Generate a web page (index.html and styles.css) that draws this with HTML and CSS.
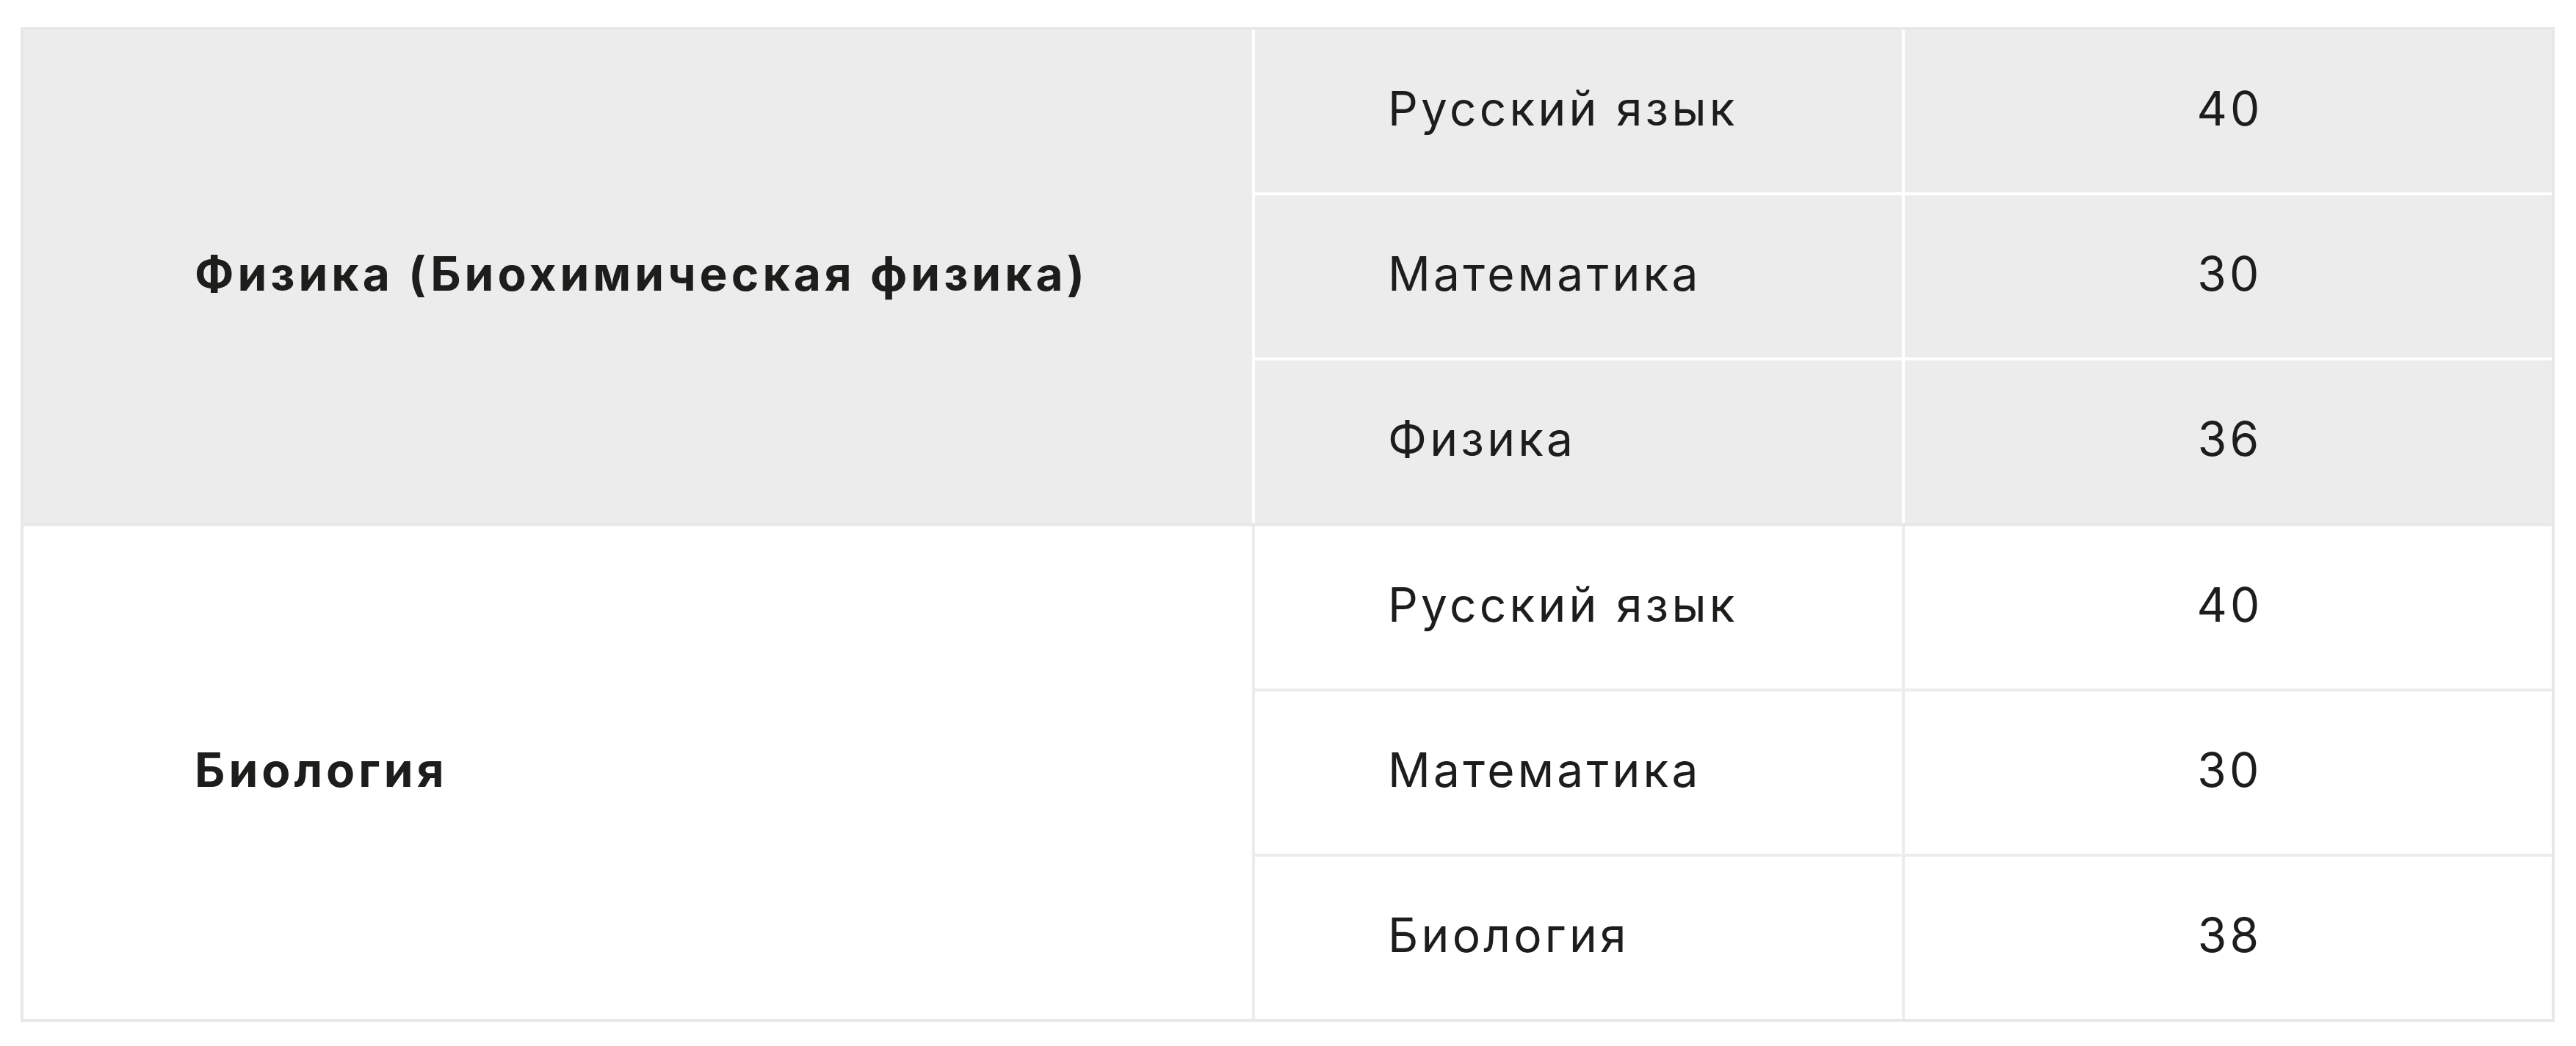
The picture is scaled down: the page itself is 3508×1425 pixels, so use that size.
FILE: index.html
```html
<!DOCTYPE html>
<html lang="ru">
<head>
<meta charset="utf-8">
<title>Проходные баллы</title>
<link rel="stylesheet" href="styles.css">
</head>
<body>
<div class="scores">
  <div class="group group--gray">
    <div class="cell cell--name">Физика (Биохимическая физика)</div>
    <div class="cell cell--subject">Русский язык</div>
    <div class="cell cell--score">40</div>
    <div class="cell cell--subject">Математика</div>
    <div class="cell cell--score">30</div>
    <div class="cell cell--subject">Физика</div>
    <div class="cell cell--score">36</div>
  </div>
  <div class="group group--white">
    <div class="cell cell--name">Биология</div>
    <div class="cell cell--subject">Русский язык</div>
    <div class="cell cell--score">40</div>
    <div class="cell cell--subject">Математика</div>
    <div class="cell cell--score">30</div>
    <div class="cell cell--subject">Биология</div>
    <div class="cell cell--score">38</div>
  </div>
</div>
</body>
</html>
```
FILE: styles.css
```css
html, body {
  margin: 0;
  padding: 0;
  background: #ffffff;
}

body {
  padding: 37px 29px 0 28px;
  font-family: Inter, "Liberation Sans", sans-serif;
  color: #1d1d1b;
}

.scores {
  display: grid;
  row-gap: 5px;
  border: 4px solid #e8e8e8;
  background: #e8e8e8;
}

.group {
  display: grid;
  grid-template-columns: 1673fr 881fr 881fr;
  grid-template-rows: repeat(3, 221px);
  gap: 4px;
}

.group--gray {
  background: #ffffff;
}

.group--gray .cell {
  background: #ececec;
}

.group--white {
  background: #ececec;
}

.group--white .cell {
  background: #ffffff;
}

.cell {
  display: flex;
  align-items: center;
  padding-bottom: 8px;
  font-size: 64px;
  font-weight: 400;
  line-height: 1;
  letter-spacing: 0.066em;
}

.cell--name {
  grid-row: span 3;
  padding-left: 233px;
  font-weight: 700;
  letter-spacing: 0.078em;
}

.cell--subject {
  padding-left: 181px;
}

.cell--score {
  justify-content: center;
  padding-left: 4px;
}
```
